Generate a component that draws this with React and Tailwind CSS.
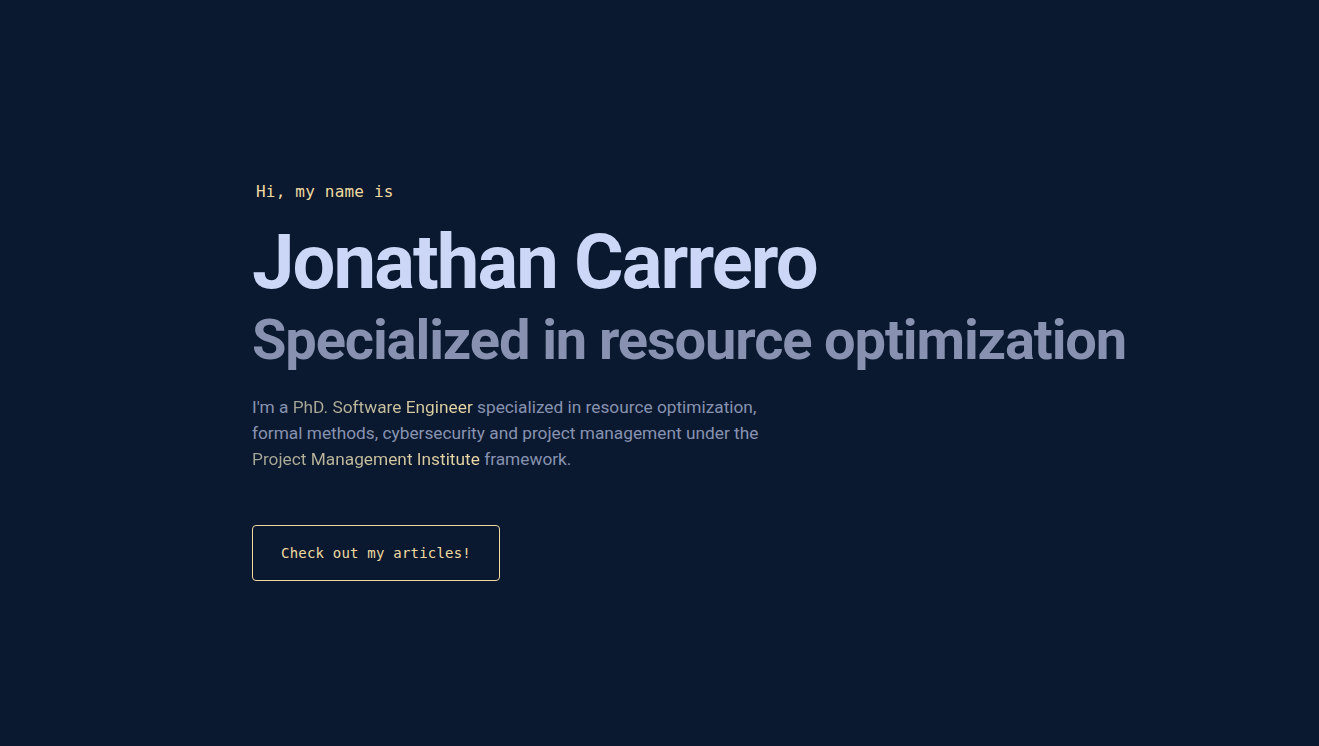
import React from 'react';

const sans = { fontFamily: 'Roboto, "Noto Sans", sans-serif' };

function Accent({ children }) {
  return (
    <span className="bg-gradient-to-r from-[#a3a496] to-[#f0dca6] bg-clip-text text-transparent">
      {children}
    </span>
  );
}

export default function App() {
  return (
    <div className="min-h-screen w-full bg-[#0a192f] text-[#8892b0]" style={sans}>
      <section className="flex flex-col items-start pl-[252px] pt-[182px]">
        <p className="ml-1 font-['DejaVu_Sans_Mono',monospace] text-[16px] leading-[20px] tracking-[0.2px] text-[#f0d9a0]">
          Hi, my name is
        </p>
        <h1 className="mt-[18px] text-[76px] font-bold leading-[84px] tracking-[-0.025em] text-[#ccd6f6]">
          Jonathan Carrero
        </h1>
        <h2 className="mt-[4px] text-[56px] font-bold leading-[64px] tracking-[-0.02em] text-[#8892b0]">
          Specialized in resource optimization
        </h2>
        <p className="mt-[22px] max-w-[540px] text-[17.3px] leading-[26px]">
          I'm a <Accent>PhD. Software Engineer</Accent> specialized in resource optimization,
          formal methods, cybersecurity and project management under the{' '}
          <Accent>Project Management Institute</Accent> framework.
        </p>
        <a
          href="#"
          className="mt-[53px] flex h-[56px] w-[248px] items-center justify-center rounded border border-[#f0d9a0] font-['DejaVu_Sans_Mono',monospace] text-[14px] tracking-[0.2px] text-[#f0d9a0]"
        >
          Check out my articles!
        </a>
      </section>
    </div>
  );
}
